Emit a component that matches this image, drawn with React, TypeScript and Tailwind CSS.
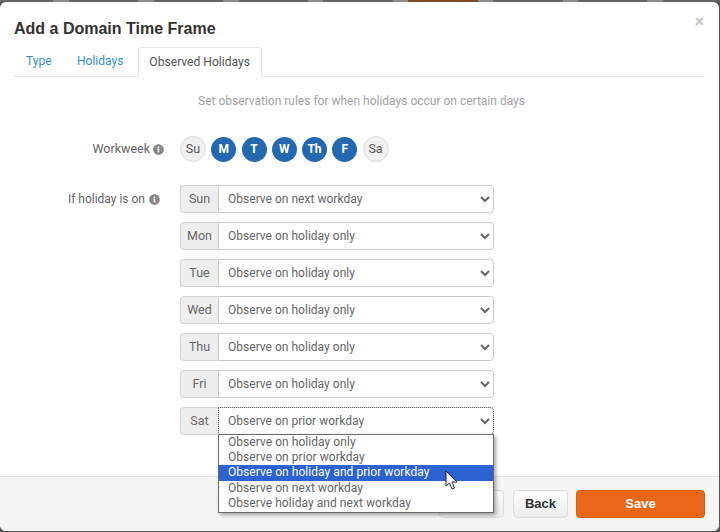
import React from 'react';
import { FaInfoCircle } from 'react-icons/fa';

const OPTIONS = [
  'Observe on holiday only',
  'Observe on prior workday',
  'Observe on holiday and prior workday',
  'Observe on next workday',
  'Observe holiday and next workday',
];

const ROWS = [
  { day: 'Sun', value: 'Observe on next workday' },
  { day: 'Mon', value: 'Observe on holiday only' },
  { day: 'Tue', value: 'Observe on holiday only' },
  { day: 'Wed', value: 'Observe on holiday only' },
  { day: 'Thu', value: 'Observe on holiday only' },
  { day: 'Fri', value: 'Observe on holiday only' },
  { day: 'Sat', value: 'Observe on prior workday' },
];

const WEEK = [
  { label: 'Su', on: false },
  { label: 'M', on: true },
  { label: 'T', on: true },
  { label: 'W', on: true },
  { label: 'Th', on: true },
  { label: 'F', on: true },
  { label: 'Sa', on: false },
];

// page behind the modal, only a sliver shows at the top
const STRIP = [
  'w-[53px] bg-[#666]', 'w-[16px] bg-[#8c8c8c]', 'w-[69px] bg-[#666]', 'w-[16px] bg-[#8c8c8c]',
  'w-[69px] bg-[#666]', 'w-[16px] bg-[#8c8c8c]', 'w-[69px] bg-[#666]', 'w-[15px] bg-[#8c8c8c]',
  'w-[70px] bg-[#666]', 'w-[15px] bg-[#8c8c8c]', 'w-[70px] bg-[#7d4a2c]', 'w-[15px] bg-[#8c8c8c]',
  'w-[70px] bg-[#666]', 'w-[15px] bg-[#8c8c8c]', 'w-[69px] bg-[#666]', 'w-[16px] bg-[#8c8c8c]',
  'w-[57px] bg-[#666]',
];

const App: React.FC = () => {
  return (
    <div className="w-[720px] h-[532px] overflow-hidden bg-[#555] font-['Roboto',sans-serif] text-[12px] text-[#555]">
      <div className="flex h-[2px]">
        {STRIP.map((c, i) => <div key={i} className={c} />)}
      </div>
      <div className="relative w-[719px] h-[529px] bg-white rounded-[6px] flex flex-col">
        <div className="flex justify-between pl-[14px] pr-[15px] pt-[16px] h-[45px]">
          <h4 className="font-['Liberation_Sans',sans-serif] text-[16px] leading-[22px] font-bold text-[#333]">Add a Domain Time Frame</h4>
          <span className="font-['Liberation_Sans',sans-serif] text-[16px] leading-[8px] font-bold text-[#c4c4c4]">×</span>
        </div>

        <div className="ml-[14px] mr-[14px] h-[29px] flex border-b border-[#e6e6e6] box-content text-[12px]">
          <a className="px-[12px] leading-[29px] text-[#2f8fd6]">Type</a>
          <a className="pl-[13.5px] pr-[14.5px] leading-[29px] text-[#2f8fd6]">Holidays</a>
          <a className="px-[10.5px] h-[30px] leading-[28px] bg-white border border-[#e6e6e6] border-b-0 rounded-t-[4px] text-[#555] text-[12.1px]">Observed Holidays</a>
        </div>

        <p className="mt-[16px] text-center text-[12px] leading-[16px] text-[#a3a3a3] pl-[4px]">Set observation rules for when holidays occur on certain days</p>

        <div className="mt-[26px] flex items-center h-[28px]">
          <div className="w-[164px] flex items-center justify-end gap-[3px] text-[12.5px] text-[#666]">
            Workweek <FaInfoCircle className="text-[#888] w-[11px] h-[11px]" />
          </div>
          <div className="ml-[16px] flex items-center gap-[5.25px]">
            {WEEK.map(d => d.on ? (
              <span key={d.label} className="w-[25px] h-[25px] rounded-full bg-[#2468b2] text-white font-bold text-[12px] flex items-center justify-center">{d.label}</span>
            ) : (
              <span key={d.label} className="w-[26px] h-[26px] rounded-full bg-[#f0f0f0] border border-[#dcdcdc] text-[#555] text-[12.5px] flex items-center justify-center">{d.label}</span>
            ))}
          </div>
        </div>

        <div className="mt-[22px] flex">
          <div className="w-[160px] h-[28px] flex items-center justify-end gap-[4px] text-[12px] text-[#666]">
            If holiday is on <FaInfoCircle className="text-[#888] w-[11px] h-[11px]" />
          </div>
          <div className="ml-[20px] flex flex-col gap-[9px]">
            {ROWS.map(r => (
              <div key={r.day} className="flex h-[28px] w-[314px]">
                <span className="w-[38px] flex items-center justify-center bg-[#eeeeee] border border-r-0 border-[#d4d4d4] rounded-l-[4px] text-[12.5px] text-[#666]">{r.day}</span>
                <select
                  defaultValue={r.value}
                  className={`flex-1 pl-[5px] bg-white border border-[#cccccc] rounded-r-[4px] text-[12px] tracking-[0.02px] text-[#666] ${r.day === 'Sat' ? 'outline-dotted outline-1 outline-[#666] -outline-offset-1' : 'outline-none'}`}
                >
                  {OPTIONS.map(o => <option key={o}>{o}</option>)}
                </select>
              </div>
            ))}
          </div>
        </div>

        <div className="mt-auto h-[55px] bg-[#f5f5f5] border-t border-[#e5e5e5] rounded-b-[6px] flex justify-end items-start pt-[13px] pr-[14px] gap-[8px] font-['Liberation_Sans',sans-serif] font-bold text-[13px]">
          <button className="w-[65px] h-[28px] rounded-[4px] border border-[#dcdcdc] bg-gradient-to-b from-white to-[#ebebeb] text-[#333]">Cancel</button>
          <button className="w-[55px] h-[28px] rounded-[4px] border border-[#dcdcdc] bg-gradient-to-b from-white to-[#ebebeb] text-[#333] ml-[1px]">Back</button>
          <button className="w-[129px] h-[28px] rounded-[4px] border border-[#d95f10] bg-[#ea6718] text-white">Save</button>
        </div>

        {/* open select list, lies over the footer */}
        <ul className="absolute left-[218px] top-[432px] w-[276px] h-[79px] bg-white border border-[#6b6b6b] shadow-[2px_2px_4px_rgba(0,0,0,0.35)] text-[12px] tracking-[0.05px] text-[#666]">
          {OPTIONS.map((o, i) => (
            <li key={o} className={i === 2 ? 'pl-[9px] h-[15.2px] leading-[15.6px] bg-[#2d62d3] text-white' : 'pl-[9px] h-[15.2px] leading-[15.6px]'}>{o}</li>
          ))}
        </ul>

        {/* mouse pointer */}
        <svg className="absolute left-[445px] top-[468px]" width="14" height="21" viewBox="0 0 14 21">
          <path d="M1 1 L1 16 L4.5 13 L7 19 L9.5 18 L7 12 L12 12 Z" fill="#fff" stroke="#222" strokeWidth="1" strokeLinejoin="round" />
        </svg>
      </div>
    </div>
  );
};

export default App;
